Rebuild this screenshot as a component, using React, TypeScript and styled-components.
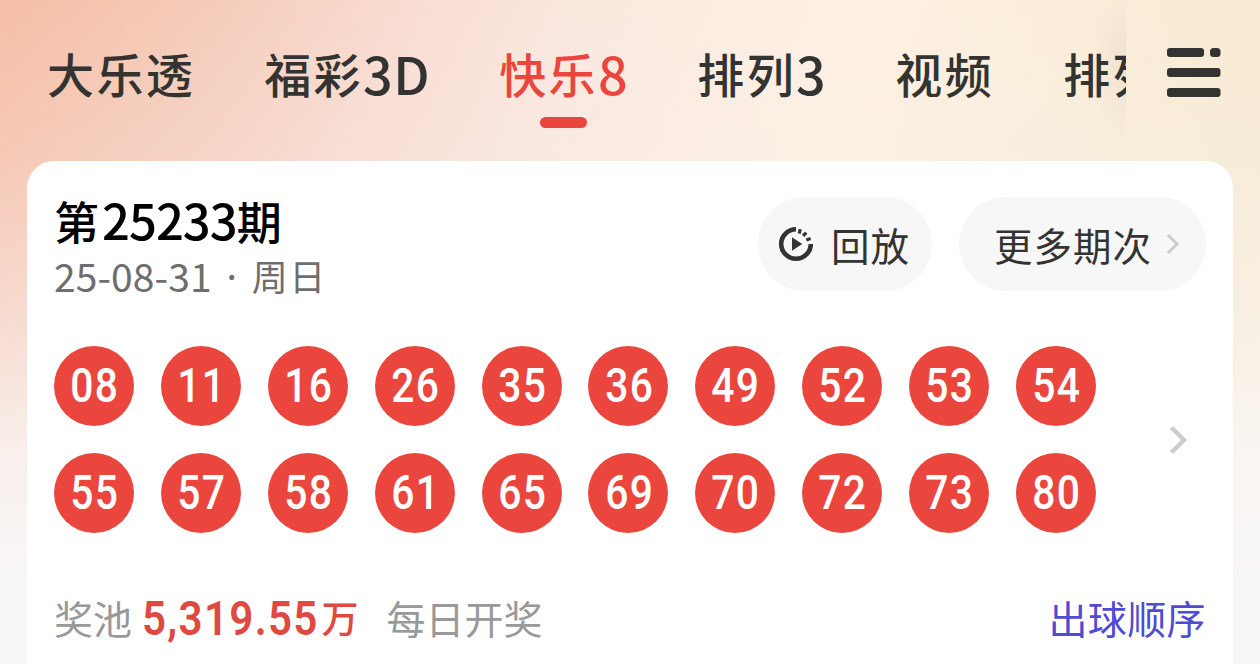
import React from 'react'
import styled, { createGlobalStyle } from 'styled-components'

const Colors = {
  Red: '#ea463d',
  Amount: '#de4a42',
  Ink: '#333432',
  Black: '#000000',
  Grey: '#6e6e6e',
  LightGrey: '#999999',
  Chevron: '#cccccc',
  Pill: '#f7f7f7',
  Link: '#4f4bd3',
  White: '#ffffff'
}

const GlobalStyle = createGlobalStyle`
  * {
    box-sizing: border-box;
  }
  body {
    margin: 0;
    overflow: hidden;
    font-family: 'Noto Sans CJK SC', sans-serif;
  }
`

const Page = styled.div`
  width: 1260px;
  height: 664px;
  display: flex;
  flex-direction: column;
  overflow: hidden;
  background: linear-gradient(
      180deg,
      rgba(247, 247, 247, 0) 0,
      rgba(247, 240, 238, 0.2) 160px,
      rgba(249, 244, 243, 0.5) 320px,
      rgba(249, 246, 245, 0.85) 450px,
      #f7f7f7 590px
    ),
    linear-gradient(
      102deg,
      #f5bda5 0%,
      #f5cdbb 16%,
      #f8dbcf 28%,
      #fae7de 40%,
      #fbece1 50%,
      #fdf0e2 62%,
      #faeedb 73%,
      #f7ebd3 90%
    );
`

const TopBar = styled.header`
  display: flex;
  flex: none;
  height: 161px;
`

const Tabs = styled.nav`
  display: flex;
  width: 1126px;
  gap: 69px;
  padding: 37px 0 0 47px;
  overflow: hidden;
  background: radial-gradient(
    ellipse 50px 80px at 1140px 65px,
    rgba(90, 80, 60, 0.08),
    rgba(90, 80, 60, 0)
  );
`

const Tab = styled.div<{ $active?: boolean }>`
  display: flex;
  flex: none;
  flex-direction: column;
  align-items: center;
  font-size: 47px;
  font-weight: 500;
  line-height: 72px;
  letter-spacing: 2.4px;
  white-space: nowrap;
  color: ${({ $active }) => ($active ? Colors.Red : Colors.Ink)};
`

const Latin = styled.span`
  font-size: 52px;
  line-height: 1;
  letter-spacing: 0.6px;
  vertical-align: -2px;
`

const Underline = styled.div`
  width: 47px;
  height: 11px;
  margin-top: 8px;
  border-radius: 6px;
  background: ${Colors.Red};
`

const MenuButton = styled.div`
  padding: 47px 0 0 40px;
  svg {
    display: block;
  }
`

const Card = styled.main`
  flex: 1;
  display: flex;
  flex-direction: column;
  margin: 0 27px;
  padding: 36px 27px 0;
  border-radius: 27px 27px 0 0;
  background: ${Colors.White};
`

const CardHead = styled.div`
  display: flex;
  justify-content: space-between;
  height: 149px;
`

const Issue = styled.div`
  height: 52px;
  font-size: 45px;
  font-weight: 500;
  line-height: 43px;
  white-space: nowrap;
  color: ${Colors.Black};
`

const IssueNumber = styled.span`
  margin-left: 3px;
  font-size: 49px;
  line-height: 43px;
  letter-spacing: -1px;
`

const DrawDate = styled.div`
  display: flex;
  height: 58px;
  font-size: 39px;
  line-height: 53px;
  letter-spacing: 0.1px;
  color: ${Colors.Grey};
`

const Dot = styled.span`
  width: 40px;
  font-family: 'Noto Sans', sans-serif;
  text-align: center;
`

const Weekday = styled.span`
  font-size: 36px;
  letter-spacing: 1.5px;
`

const Actions = styled.div`
  display: flex;
  gap: 27px;
`

const Pill = styled.div<{ $width: number; $shift?: number }>`
  display: flex;
  align-items: center;
  justify-content: center;
  width: ${({ $width }) => $width}px;
  height: 94px;
  padding-left: ${({ $shift }) => $shift || 0}px;
  border-radius: 47px;
  background: ${Colors.Pill};
  color: ${Colors.Ink};
  font-size: 38.5px;
  letter-spacing: 1px;
`

const PlayIcon = styled.svg`
  margin: 0 17px 0 -2px;
`

const SmallChevron = styled.svg`
  margin-left: 14px;
`

const Draw = styled.div`
  display: flex;
  align-items: center;
  justify-content: space-between;
  padding-right: 18px;
`

const Balls = styled.div`
  display: grid;
  grid-template-columns: repeat(10, 80px);
  gap: 27px 26.9px;
`

const Ball = styled.div`
  display: flex;
  align-items: center;
  justify-content: center;
  width: 80px;
  height: 80px;
  border-radius: 50%;
  background: ${Colors.Red};
  color: ${Colors.White};
`

const BallNumber = styled.span`
  margin-right: -1.6px;
  font-family: Roboto, sans-serif;
  font-size: 48px;
  font-weight: 460;
  line-height: 82px;
  letter-spacing: 1.4px;
  transform: scaleX(0.85);
`

const Footer = styled.div`
  display: flex;
  align-items: center;
  height: 60px;
  margin-top: 54px;
  font-size: 39px;
  white-space: nowrap;
  color: ${Colors.LightGrey};
`

// Roboto squeezed to the width of a condensed face, the negative margin gives the spare width back
const PoolAmount = styled.span`
  margin: 2px -30px 0 10px;
  font-family: Roboto, sans-serif;
  font-size: 49px;
  font-weight: 560;
  letter-spacing: 1.5px;
  transform: scaleX(0.86);
  transform-origin: left center;
  color: ${Colors.Amount};
`

const PoolUnit = styled.span`
  margin: 0 28px 0 4px;
  font-size: 37px;
  font-weight: 500;
  color: ${Colors.Amount};
`

const OrderLink = styled.span`
  margin-left: auto;
  letter-spacing: 0.4px;
  color: ${Colors.Link};
`

const tabs = [
  { name: '大乐透' },
  { name: '福彩', suffix: '3D' },
  { name: '快乐', suffix: '8', active: true },
  { name: '排列', suffix: '3' },
  { name: '视频' },
  { name: '排列' }
]

const numbers = [
  '08', '11', '16', '26', '35', '36', '49', '52', '53', '54',
  '55', '57', '58', '61', '65', '69', '70', '72', '73', '80'
]

const App = () => {
  return (
    <>
      <GlobalStyle />
      <Page>
        <TopBar>
          <Tabs>
            {tabs.map((tab, i) => (
              <Tab key={`tab-${i}`} $active={tab.active}>
                <div>
                  {tab.name}
                  {tab.suffix && <Latin>{tab.suffix}</Latin>}
                </div>
                {tab.active && <Underline />}
              </Tab>
            ))}
          </Tabs>
          <MenuButton>
            <svg width='56' height='52' viewBox='0 0 56 52' fill={Colors.Ink}>
              <rect x='1' y='1' width='37' height='9' rx='3' />
              <rect x='44' y='1' width='10.5' height='9' rx='3.5' />
              <rect x='1' y='21' width='53.5' height='9' rx='3' />
              <rect x='1' y='41' width='53.5' height='9' rx='3' />
            </svg>
          </MenuButton>
        </TopBar>
        <Card>
          <CardHead>
            <div>
              <Issue>
                第<IssueNumber>25233</IssueNumber>期
              </Issue>
              <DrawDate>
                25-08-31<Dot>·</Dot>
                <Weekday>周日</Weekday>
              </DrawDate>
            </div>
            <Actions>
              <Pill $width={174}>
                <PlayIcon width='36' height='36' viewBox='0 0 36 36' fill='none'>
                  <path
                    d='M18 3.2A14.8 14.8 0 1 0 32.8 18'
                    stroke={Colors.Ink}
                    strokeWidth='4.6'
                  />
                  <path
                    d='M22.2 3.2l-1 4.4M28.2 6.6l-3.1 3.3M32.6 12.6l-4.3 1.5'
                    stroke={Colors.Ink}
                    strokeWidth='3.2'
                  />
                  <path d='M14 11.3v13.4L24.2 18z' fill={Colors.Ink} />
                </PlayIcon>
                回放
              </Pill>
              <Pill $width={247} $shift={9}>
                更多期次
                <SmallChevron width='14' height='22' viewBox='0 0 14 22' fill='none'>
                  <path d='M2 2l9 9-9 9' stroke={Colors.Chevron} strokeWidth='3' />
                </SmallChevron>
              </Pill>
            </Actions>
          </CardHead>
          <Draw>
            <Balls>
              {numbers.map((n) => (
                <Ball key={n}>
                  <BallNumber>{n}</BallNumber>
                </Ball>
              ))}
            </Balls>
            <svg width='19' height='30' viewBox='0 0 19 30' fill='none'>
              <path d='M2.5 2.5L15 15 2.5 27.5' stroke={Colors.Chevron} strokeWidth='4.5' />
            </svg>
          </Draw>
          <Footer>
            奖池
            <PoolAmount>5,319.55</PoolAmount>
            <PoolUnit>万</PoolUnit>
            每日开奖
            <OrderLink>出球顺序</OrderLink>
          </Footer>
        </Card>
      </Page>
    </>
  )
}

export default App
